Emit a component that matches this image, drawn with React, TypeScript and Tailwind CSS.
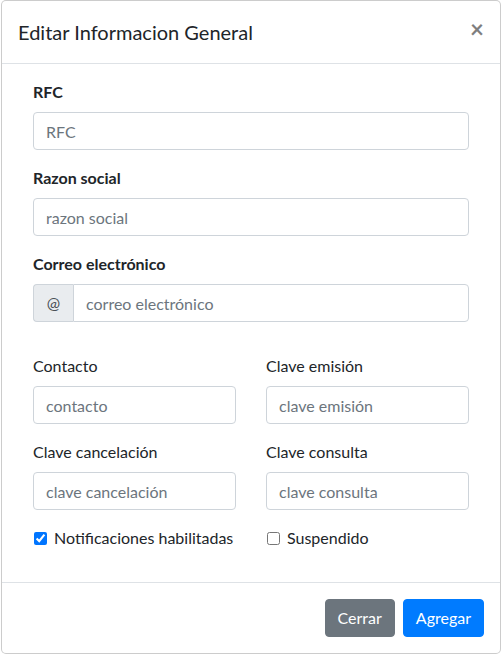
import React from "react";

function Label({ children, bold }: { children: React.ReactNode; bold?: boolean }) {
  return (
    <label className={`block mb-2 text-[16px] leading-6 text-[#212529] ${bold ? "font-bold" : "font-normal"}`}>
      {children}
    </label>
  );
}

function Input({ placeholder, className = "" }: { placeholder: string; className?: string }) {
  return (
    <input
      type="text"
      placeholder={placeholder}
      className={`block h-[38px] w-full border border-[#ced4da] bg-white px-3 text-[16px] leading-6 text-[#495057] outline-none placeholder:text-[#6c757d] ${className}`}
    />
  );
}

export default function App() {
  return (
    <div className="min-h-screen bg-white pl-px font-['Lato','Liberation_Sans',sans-serif] text-[#212529]">
      <div className="w-[500px] rounded-[5px] border border-[rgba(0,0,0,0.2)] bg-white">
        {/* header */}
        <div className="flex items-start justify-between border-b border-[#dee2e6] p-4">
          <h5 className="text-[20px] font-normal leading-[30px] text-[#212529]">Editar Informacion General</h5>
          <button className="-m-4 ml-auto p-4 text-[24px] font-bold leading-[24px] text-black opacity-50">
            ×
          </button>
        </div>

        {/* body */}
        <div className="p-4">
          <div className="px-[15px]">
            <div className="mb-4">
              <Label bold>RFC</Label>
              <Input placeholder="RFC" className="rounded-[4px]" />
            </div>
            <div className="mb-4">
              <Label bold>Razon social</Label>
              <Input placeholder="razon social" className="rounded-[4px]" />
            </div>
            <div className="mb-8">
              <Label bold>Correo electrónico</Label>
              <div className="flex">
                <span className="flex h-[38px] w-[40px] items-center justify-center rounded-l-[4px] border border-r-0 border-[#ced4da] bg-[#e9ecef] text-[16px] text-[#495057]">
                  @
                </span>
                <Input placeholder="correo electrónico" className="flex-1 rounded-r-[4px]" />
              </div>
            </div>

            <div className="grid grid-cols-2 gap-x-[30px]">
              <div className="mb-4">
                <Label>Contacto</Label>
                <Input placeholder="contacto" className="rounded-[4px]" />
              </div>
              <div className="mb-4">
                <Label>Clave emisión</Label>
                <Input placeholder="clave emisión" className="rounded-[4px]" />
              </div>
              <div className="mb-4">
                <Label>Clave cancelación</Label>
                <Input placeholder="clave cancelación" className="rounded-[4px]" />
              </div>
              <div className="mb-4">
                <Label>Clave consulta</Label>
                <Input placeholder="clave consulta" className="rounded-[4px]" />
              </div>
              <label className="mb-4 flex items-center gap-[7px] text-[16px] leading-6">
                <input type="checkbox" defaultChecked className="ml-px h-[13px] w-[13px] accent-[#0075ff]" />
                Notificaciones habilitadas
              </label>
              <label className="mb-4 flex items-center gap-[7px] text-[16px] leading-6">
                <input type="checkbox" className="ml-px h-[13px] w-[13px]" />
                Suspendido
              </label>
            </div>
          </div>
        </div>

        {/* footer */}
        <div className="flex items-center justify-end border-t border-[#dee2e6] p-3">
          <button className="m-1 rounded-[4px] border border-[#6c757d] bg-[#6c757d] px-3 py-[6px] text-[16px] leading-6 text-white">
            Cerrar
          </button>
          <button className="m-1 rounded-[4px] border border-[#007bff] bg-[#007bff] px-3 py-[6px] text-[16px] leading-6 text-white">
            Agregar
          </button>
        </div>
      </div>
    </div>
  );
}
